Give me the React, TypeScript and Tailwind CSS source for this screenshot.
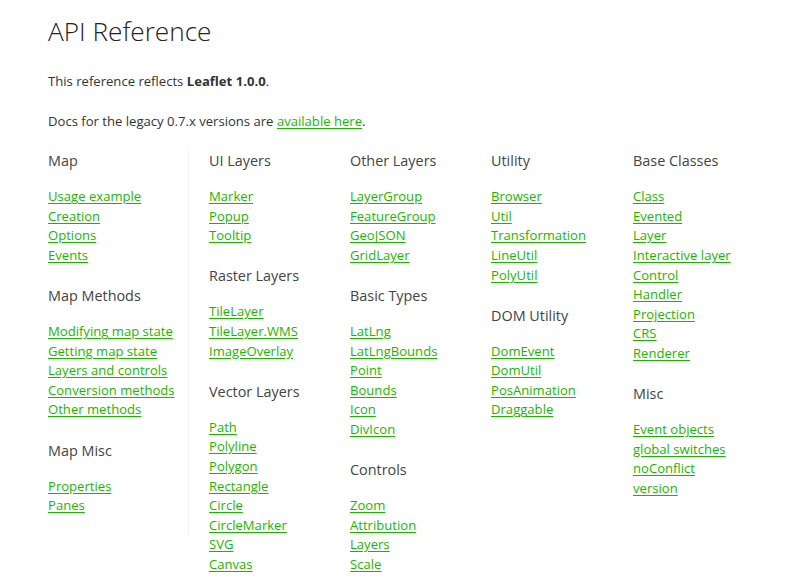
import React from "react";

type Section = { title: string; links: string[] };

const columns: Section[][] = [
  [
    { title: "Map", links: ["Usage example", "Creation", "Options", "Events"] },
    { title: "Map Methods", links: ["Modifying map state", "Getting map state", "Layers and controls", "Conversion methods", "Other methods"] },
    { title: "Map Misc", links: ["Properties", "Panes"] },
  ],
  [
    { title: "UI Layers", links: ["Marker", "Popup", "Tooltip"] },
    { title: "Raster Layers", links: ["TileLayer", "TileLayer.WMS", "ImageOverlay"] },
    { title: "Vector Layers", links: ["Path", "Polyline", "Polygon", "Rectangle", "Circle", "CircleMarker", "SVG", "Canvas"] },
  ],
  [
    { title: "Other Layers", links: ["LayerGroup", "FeatureGroup", "GeoJSON", "GridLayer"] },
    { title: "Basic Types", links: ["LatLng", "LatLngBounds", "Point", "Bounds", "Icon", "DivIcon"] },
    { title: "Controls", links: ["Zoom", "Attribution", "Layers", "Scale"] },
  ],
  [
    { title: "Utility", links: ["Browser", "Util", "Transformation", "LineUtil", "PolyUtil"] },
    { title: "DOM Utility", links: ["DomEvent", "DomUtil", "PosAnimation", "Draggable"] },
  ],
  [
    { title: "Base Classes", links: ["Class", "Evented", "Layer", "Interactive layer", "Control", "Handler", "Projection", "CRS", "Renderer"] },
    { title: "Misc", links: ["Event objects", "global switches", "noConflict", "version"] },
  ],
];

const colClass = [
  "w-[141px] border-r border-[#f0f0f0] pb-[18px]",
  "w-[161px] pl-[20px]",
  "w-[141px]",
  "w-[142px]",
  "flex-1",
];

function Col({ sections }: { sections: Section[] }) {
  return (
    <div className="flex flex-col gap-[19.5px]">
      {sections.map((s) => (
        <div key={s.title}>
          <h4 className="text-[14.4px] leading-[22px] text-[#444] mb-[15px]">{s.title}</h4>
          <ul>
            {s.links.map((l) => (
              <li key={l} className="text-[13.1px] leading-[19.6px]">
                <a href="#" className="text-[#1EB300] underline underline-offset-[2px]">
                  {l}
                </a>
              </li>
            ))}
          </ul>
        </div>
      ))}
    </div>
  );
}

export default function App() {
  return (
    <div
      className="min-h-[588px] bg-white px-[48px] text-[#333]"
      style={{ fontFamily: '"Open Sans", sans-serif' }}
    >
      <h1 className="pt-[14px] text-[26.2px] font-light leading-[34px] text-[#222]">API Reference</h1>
      <p className="mt-[24px] text-[13.1px] leading-[19.6px]">
        This reference reflects <strong className="font-bold">Leaflet 1.0.0</strong>.
      </p>
      <p className="mt-[20px] text-[13.1px] leading-[19.6px]">
        Docs for the legacy 0.7.x versions are{" "}
        <a href="#" className="text-[#1EB300] underline underline-offset-[2px]">
          available here
        </a>
        .
      </p>
      <div className="mt-[19px] flex items-start">
        {columns.map((c, i) => (
          <div key={i} className={colClass[i]}>
            <Col sections={c} />
          </div>
        ))}
      </div>
    </div>
  );
}
